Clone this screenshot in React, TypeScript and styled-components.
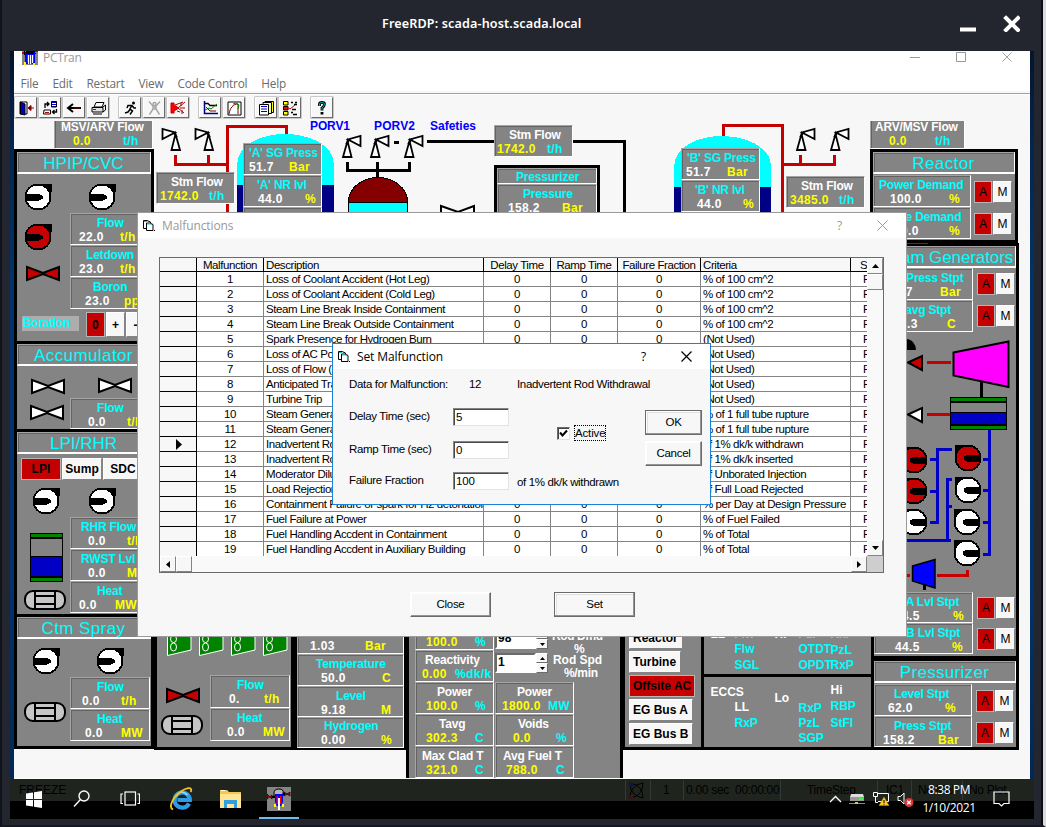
import React from "react";
import styled, { createGlobalStyle, css } from "styled-components";

const GlobalStyle = createGlobalStyle`
  * { box-sizing: border-box; }
  body { margin: 0; overflow: hidden; }
`;

const SYS = `"Liberation Sans", Arial, sans-serif`;
const SEGOE = `"Open Sans", "Noto Sans", sans-serif`;
const C = {
  gray: "#848484",
  face: "#f7f7f7",
  cyan: "#00ffff",
  yellow: "#ffff00",
  white: "#ffffff",
  red: "#c60000",
  blue: "#0000c6",
  green: "#008400",
  navy: "#000084",
  maroon: "#840000",
};

/* ---------- remote desktop frame ---------- */

const Frame = styled.div`
  width: 1046px;
  height: 827px;
  padding: 0 9px 6px 8px;
  background: #23262f;
  border-left: 2px solid #10131b;
  border-right: 3px solid #dcdcde;
  border-bottom: 2px solid #151820;
  box-shadow: inset -2px 0 0 #0d0e12;
  display: flex;
  flex-direction: column;
  overflow: hidden;
`;

const FrameBar = styled.header`
  height: 51px;
  flex: none;
  display: flex;
  align-items: center;
  padding: 0 14px 4px 372px;
  color: #fff;
  font: 600 12.6px/20px "Noto Sans", sans-serif;
  letter-spacing: 0.13px;
  span { white-space: nowrap; flex: 1; }
  svg { display: block; }
`;

const Desktop = styled.main`
  position: relative;
  width: 1024px;
  height: 768px;
  flex: none;
  padding: 0 4px;
  background: linear-gradient(#04152d, #04254f 12%, #003468 30%, #00336a 70%, #04254f);
  overflow: hidden;
`;

const AppWindow = styled.section`
  width: 1016px;
  height: 768px;
  background: ${C.face};
  display: flex;
  flex-direction: column;
`;

const TitleBar = styled.div`
  height: 20px;
  background: #fff;
  padding-left: 8px;
  display: flex;
  color: #999;
  font: 12px/14px ${SEGOE};
  overflow: hidden;
  span { flex: 1; padding-left: 5px; letter-spacing: -0.3px; }
`;

const MenuBar = styled.nav`
  height: 20px;
  background: #fff;
  padding: 3px 6.5px 0;
  display: flex;
  gap: 14px;
  color: #6b6b6b;
  font: 11.8px/18px ${SEGOE};
  letter-spacing: -0.2px;
`;

const ToolBar = styled.div`
  height: 30px;
  padding: 6px 0 0 1px;
  display: flex;
  gap: 2px;
  background: linear-gradient(${C.face} 0 2px, #a0a0a0 2px 3px, #fff 3px 4px, ${C.face} 4px);
`;

const ToolButton = styled.button<{ $gap?: boolean }>`
  width: 22px;
  height: 21px;
  padding: 0;
  margin-left: ${(p) => (p.$gap ? 8 : 0)}px;
  border: 1px solid;
  border-color: #fff #6b6b6b #6b6b6b #fff;
  box-shadow: 0 0 0 0.5px #9a9a9a;
  background: ${C.face};
  display: grid;
  place-items: center;
`;

/* ---------- plant mimic ---------- */

const Mimic = styled.div`
  position: relative;
  width: 1016px;
  height: 657px;
  overflow: hidden;
  background: ${C.face};
  font: bold 12px/14px ${SYS};
`;

const Drawing = styled.svg`
  position: absolute;
  inset: 0;
  display: block;
  text { font: bold 12px ${SYS}; }
`;

/* A piece of plant equipment pinned on the mimic at plant coordinates. */
const Pinned = styled.div<{ $x: number; $y: number; $w?: number; $h?: number }>`
  position: absolute;
  left: ${(p) => p.$x - 14}px;
  top: ${(p) => p.$y - 121}px;
  width: ${(p) => (p.$w ? p.$w + "px" : "auto")};
  height: ${(p) => (p.$h ? p.$h + "px" : "auto")};
`;

const Column = styled(Pinned)`
  background: #000;
  display: flex;
  flex-direction: column;
  overflow: hidden;
`;

const Panel = styled.section<{ $h: number; $gap?: number }>`
  height: ${(p) => p.$h}px;
  flex: none;
  margin-bottom: ${(p) => p.$gap ?? 3}px;
  background: ${C.gray};
  display: flex;
  flex-direction: column;
`;

const bevelIn = css`
  border: 1px solid;
  border-color: #a5a5a5 #fff #fff #a5a5a5;
  box-shadow: inset 1px 1px 0 #636363;
`;

const PanelTitle = styled.h2<{ $ls?: number }>`
  ${bevelIn}
  height: 22px;
  flex: none;
  margin: 0;
  border-bottom-width: 2px;
  color: ${C.cyan};
  font: 17px/20px ${SYS};
  letter-spacing: ${(p) => p.$ls ?? 0.4}px;
  text-align: center;
  padding: 1px 1px 0 0;
  white-space: nowrap;
`;

const Stack = styled.div<{ $top?: number; $left?: number; $right?: number }>`
  padding: ${(p) => p.$top ?? 0}px ${(p) => p.$right ?? 1}px 0 ${(p) => p.$left ?? 0}px;
  display: flex;
  flex-direction: column;
`;

const ReadoutBox = styled.div<{ $h: number; $w?: number; $lift?: number }>`
  ${bevelIn}
  border-bottom-width: 1px;
  height: ${(p) => p.$h}px;
  width: ${(p) => (p.$w ? p.$w + "px" : "auto")};
  flex: none;
  padding-top: ${(p) => 2 - (p.$lift ?? 0)}px;
  background: ${C.gray};
  overflow: hidden;
  white-space: nowrap;
`;

const ReadoutLabel = styled.div<{ $x: number; $c: string }>`
  height: 14px;
  padding-left: ${(p) => p.$x - 1}px;
  color: ${(p) => p.$c};
  letter-spacing: -0.2px;
`;

const ReadoutRow = styled.div<{ $v: number; $u: number; $uc: string; $vc: string }>`
  display: grid;
  height: 14px;
  grid-template-columns: ${(p) => p.$u - p.$v}px auto;
  padding-left: ${(p) => p.$v - 1}px;
  color: ${(p) => p.$vc};
  letter-spacing: 0.35px;
  span + span { color: ${(p) => p.$uc}; }
`;

type ReadoutProps = {
  l: string; lx: number; v: string; vx: number; u: string; ux: number;
  h?: number; w?: number; steam?: boolean; lift?: number;
};

function Readout({ l, lx, v, vx, u, ux, h = 32, w, steam, lift }: ReadoutProps) {
  return (
    <ReadoutBox $h={h} $w={w} $lift={lift}>
      <ReadoutLabel $x={lx} $c={steam ? C.white : C.cyan}>{l}</ReadoutLabel>
      <ReadoutRow $v={vx} $u={ux} $vc={steam ? C.yellow : C.white} $uc={steam ? C.cyan : C.yellow}>
        <span>{v}</span>
        <span>{u}</span>
      </ReadoutRow>
    </ReadoutBox>
  );
}

const KeyRow = styled.div<{ $top: number; $left: number; $gap?: number }>`
  display: flex;
  gap: ${(p) => p.$gap ?? 1}px;
  margin: ${(p) => p.$top}px 0 0 ${(p) => p.$left}px;
`;

const Key = styled.button<{ $w: number; $h?: number; $on?: boolean; $light?: boolean }>`
  flex: none;
  width: ${(p) => p.$w}px;
  height: ${(p) => p.$h ?? 22}px;
  padding: 0;
  border: 1px solid;
  border-color: #fff #848484 #848484 #fff;
  outline: ${(p) => (p.$on ? "1px solid #b5b5b5" : "none")};
  outline-offset: -1px;
  background: ${(p) => (p.$on ? C.red : C.face)};
  color: #000;
  font: ${(p) => (p.$light ? "normal 12px" : "bold 12px")}/14px ${SYS};
  letter-spacing: ${(p) => (p.$light ? 0 : 0.1)}px;
  white-space: nowrap;
  overflow: hidden;
`;

const Boration = styled.span`
  width: 57px;
  height: 15px;
  margin: 4px 6px 0 0;
  padding-left: 1px;
  background: #adadad;
  color: ${C.cyan};
  letter-spacing: -0.3px;
`;

const SetpointRow = styled.div`
  display: flex;
`;

function Setpoint({ w, kt, kl = 4, ...r }: ReadoutProps & { kt: number; kl?: number }) {
  return (
    <SetpointRow>
      <Readout w={w} {...r} />
      <KeyRow $top={kt} $left={kl}>
        <Key $w={18} $on $light>A</Key>
        <Key $w={19} $light>M</Key>
      </KeyRow>
    </SetpointRow>
  );
}

const Grid2 = styled.div`
  display: grid;
  grid-template-columns: 79px 79px;
  column-gap: 1px;
  padding-left: 6px;
`;

const SpinBox = styled.div<{ $h: number }>`
  display: flex;
  width: 53px;
  height: ${(p) => p.$h}px;
  input {
    width: 41px;
    border: 2px solid;
    border-color: #6b6b6b #fff #fff #6b6b6b;
    padding: 0 0 2px 1px;
    font: bold 12px ${SYS};
    background: #fff;
    color: #000;
  }
  div { display: flex; flex-direction: column; }
`;

const Spin = styled.button`
  width: 12px;
  flex: 1;
  min-height: 0;
  padding: 0;
  border: 1px solid;
  border-color: #fff #6b6b6b #6b6b6b #fff;
  background: ${C.face};
  display: grid;
  place-items: center;
  svg { display: block; }
`;

function Spinner({ value, h }: { value: string; h: number }) {
  return (
    <SpinBox $h={h}>
      <input defaultValue={value} />
      <div>
        <Spin><svg width="5" height="3"><path d="M2.5 0 5 3H0z" /></svg></Spin>
        <Spin><svg width="5" height="3"><path d="M2.5 3 5 0H0z" /></svg></Spin>
      </div>
    </SpinBox>
  );
}

/* ---------- plant symbols ---------- */

function Pump({ x, y, on, left }: { x: number; y: number; on?: boolean; left?: boolean }) {
  return (
    <g transform={`translate(${x} ${y})${left ? " scale(-1 1)" : ""}`} shapeRendering="crispEdges">
      <rect x="2" y="-13.5" width="11.5" height="8" />
      <circle r="12.5" fill={on ? C.red : "#fff"} stroke="#000" strokeWidth="2" />
      <path d="M-13 -3.5H1L4.5 -1V1.5L1 3.5H-13z" />
    </g>
  );
}

function BowTie({ x, y, fill = "#fff", w = 34 }: { x: number; y: number; fill?: string; w?: number }) {
  return (
    <path
      d={`M${x + 1} ${y + 1}V${y + 14}L${x + w / 2} ${y + 8}L${x + w - 1} ${y + 14}V${y + 1}L${x + w / 2} ${y + 7}z`}
      fill={fill} stroke="#000" strokeWidth="2"
    />
  );
}

function Exchanger({ x, y }: { x: number; y: number }) {
  return (
    <g stroke="#000" strokeWidth="2" fill="#c6c6c6">
      <rect x={x + 1} y={y + 1} width="40" height="18" rx="8" />
      <path d={`M${x + 11} ${y + 1}V${y + 19}M${x + 31} ${y + 1}V${y + 19}M${x + 11} ${y + 6}H${x + 31}M${x + 11} ${y + 14}H${x + 31}`} />
    </g>
  );
}

function Relief({ x, y, flip }: { x: number; y: number; flip?: boolean }) {
  return (
    <g transform={`translate(${x} ${y})${flip ? " translate(20 0) scale(-1 1)" : ""}`} fill="#fff" stroke="#000" strokeWidth="1.8">
      <path d="M1.500 1V11L14 4.500z" />
      <path d="M14.500 6L10.500 22H19z" />
      <path d="M12 4L16 9" />
    </g>
  );
}

function Fan({ x }: { x: number }) {
  return (
    <g>
      <path d={`M${x} 628L${x + 23.5} 637V650L${x} 655.500z`} fill={C.green} stroke="#fff" />
      <g fill="none" stroke="#fff">
        <ellipse cx={x + 6} cy="639" rx="3" ry="3.500" />
        <ellipse cx={x + 6} cy="647" rx="3" ry="4" />
      </g>
    </g>
  );
}

function Tank({ x, y, w, h, level }: { x: number; y: number; w: number; h: number; level: number }) {
  return (
    <g shapeRendering="crispEdges">
      <rect x={x} y={y} width={w} height={h} />
      <rect x={x + 1} y={y + 1} width={w - 2} height="3" fill={C.green} />
      <rect x={x + 1} y={y + 6} width={w - 2} height={level - 7} fill={C.gray} />
      <rect x={x + 1} y={y + level} width={w - 2} height={h - level - 6} fill={C.blue} />
      <rect x={x + 1} y={y + h - 4} width={w - 2} height="3" fill={C.green} />
    </g>
  );
}

function Steam({ x, y }: { x: number; y: number }) {
  return (
    <g shapeRendering="crispEdges">
      <path d={`M${x} ${y + 51}V${y + 31}C${x} ${y + 10} ${x + 25} ${y} ${x + 48} ${y}S${x + 97} ${y + 10} ${x + 97} ${y + 31}V${y + 51}z`} fill={C.cyan} />
      <rect x={x} y={y + 51} width="97" height="40" fill={C.navy} />
    </g>
  );
}

const LAMPS: [string, number, number, boolean?][] = [
  ["LL", 711, 638, true], ["Flw", 735, 638], ["Hi", 775, 638, true], ["PzP", 799, 638], ["RxP", 831, 638],
  ["Flw", 735, 653], ["SGL", 735, 669], ["OTDT", 799, 653], ["PzL", 831, 654],
  ["OPDT", 799, 669], ["RxP", 831, 669], ["ECCS", 711, 696, true], ["Hi", 831, 694, true],
  ["Lo", 775, 702, true], ["LL", 735, 711, true], ["RxP", 799, 712], ["RBP", 831, 710],
  ["RxP", 735, 727], ["PzL", 799, 727], ["StFl", 831, 727], ["SGP", 799, 742],
];

function Piping() {
  return (
    <Drawing width="1016" height="657" viewBox="14 121 1016 657">
      <Steam x={237} y={134} />
      <Steam x={674} y={136} />
      <g fill="none" stroke={C.red} strokeWidth="3" shapeRendering="crispEdges">
        <path d="M227.500 214V126.500H286.500V134M175.500 155V164.500H227M208.500 155V164" />
        <path d="M782.500 214V125.500H723.500V136M783 164.500H834.500V155M800.500 155V164" />
      </g>
      <Relief x={161} y={128} />
      <Relief x={194} y={128} />
      <Relief x={796} y={128} flip />
      <Relief x={830} y={128} flip />
      <g fill="none" stroke="#000" strokeWidth="3" shapeRendering="crispEdges">
        <path d="M347.500 162V170.500H409.500V162M377.500 162V178M394 142H399M427 141.500H624.500V214" />
      </g>
      <Relief x={342} y={135} flip />
      <Relief x={370} y={135} flip />
      <Relief x={404} y={135} flip />
      <g shapeRendering="crispEdges">
        <path d="M348.500 214V202C348.500 188 362 177.500 378 177.500S407.500 188 407.500 202V214z" fill={C.maroon} stroke="#000" />
        <rect x="349" y="203" width="58" height="12" fill={C.cyan} />
        <path d="M348 202.500H408" stroke="#000" />
      </g>
      <path d="M441 214V206L458 212L474 206V214" fill="#fff" stroke="#000" strokeWidth="2" />
      <g fill="#0000ff">
        <text x="310" y="130" textLength="40">PORV1</text>
        <text x="374" y="130" textLength="41">PORV2</text>
        <text x="430" y="130" textLength="46">Safeties</text>
      </g>
    </Drawing>
  );
}

function Equipment() {
  return (
    <Drawing width="1016" height="657" viewBox="14 121 1016 657">
      <Pump x={38} y={197} />
      <Pump x={102} y={197} />
      <Pump x={38} y={237} on />
      <BowTie x={26} y={266} fill={C.red} />
      <BowTie x={31} y={379} />
      <BowTie x={98} y={378} />
      <BowTie x={30} y={405} />
      <Pump x={46} y={501} />
      <Pump x={102} y={501} />
      <Tank x={30} y={533} w={33} h={49} level={24} />
      <Exchanger x={24} y={590} />
      <Pump x={46} y={661} />
      <Pump x={110} y={661} />
      <Exchanger x={24} y={702} />

      <Fan x={167.5} /><Fan x={199.5} /><Fan x={231.5} /><Fan x={263.5} />
      <BowTie x={166} y={688} fill={C.red} />
      <Exchanger x={161} y={715} />

      <g fill="#fff">
        <text x="552" y="640" textLength="51">Rod Dmd</text>
        <text x="574" y="653">%</text>
        <text x="553" y="664" textLength="49">Rod Spd</text>
        <text x="564" y="677" textLength="34">%/min</text>
      </g>
      <rect x="704" y="674" width="167" height="3" />
      {LAMPS.map(([t, x, y, w], i) => (
        <text key={i} x={x - 0.5} y={y} fill={w ? "#fff" : C.cyan}>{t}</text>
      ))}

      <path d="M906 339A10 11 0 0 1 916 350H906z" />
      <path d="M906 243.500H928" stroke={C.red} />
      <g fill="none" stroke={C.red} strokeWidth="3" shapeRendering="crispEdges">
        <path d="M927 362.500H951M927 414.500H951M905 575.500H910M937 575.500H967.500V570" />
      </g>
      <g stroke="#000" strokeWidth="2">
        <path d="M908 362.500L922 356V370z" fill={C.red} />
        <path d="M908 414.500L922 408V422z" fill="#fff" />
        <path d="M953.500 352.500L1008.500 341.500V387L953.500 375.500z" fill="#ff00ff" />
        <path d="M912.500 566L935 559.500V588L912.500 581z" fill="#0000ff" strokeWidth="1.500" />
      </g>
      <path d="M981.500 381V397M924.500 585V590" stroke="#000" strokeWidth="3" />
      <Tank x={950} y={397} w={57} h={33} level={16} />
      <g fill="none" stroke={C.blue} strokeWidth="3" shapeRendering="crispEdges">
        <path d="M989.500 430V554.500H983M983 459.500H989M983 490.500H989M983 522.500H989" />
        <path d="M952 449.500H937.500V522.500H930M930 459.500H937M930 491.500H937" />
        <path d="M952 479.500H947.500V540M947 506.500H952M905 540.500H951" />
      </g>
      <Pump x={914} y={460} on left />
      <Pump x={914} y={491} on left />
      <Pump x={914} y={522} left />
      <Pump x={968} y={458} on left />
      <Pump x={968} y={490} left />
      <Pump x={967} y={522} left />
      <Pump x={967} y={553} left />
    </Drawing>
  );
}

const BusKeys = styled.div`
  display: flex;
  flex-direction: column;
  gap: 2px;
  padding: 0 0 0 4px;
  button { text-align: left; padding-left: 3px; letter-spacing: 0; }
`;

function Plant() {
  return (
    <Mimic>
      <Piping />
      <Pinned $x={54} $y={117}><Readout l="MSV/ARV Flow" lx={7} v="0.0" vx={19} u="t/h" ux={69} w={99} steam /></Pinned>
      <Pinned $x={870} $y={117}><Readout l="ARV/MSV Flow" lx={5} v="0.0" vx={19} u="t/h" ux={65} w={95} steam /></Pinned>
      <Pinned $x={156} $y={172}><Readout l="Stm Flow" lx={15} v="1742.0" vx={4} u="t/h" ux={53} w={79} steam /></Pinned>
      <Pinned $x={494} $y={125}><Readout l="Stm Flow" lx={15} v="1742.0" vx={3} u="t/h" ux={53} w={79} steam /></Pinned>
      <Pinned $x={786} $y={176}><Readout l="Stm Flow" lx={15} v="3485.0" vx={4} u="t/h" ux={53} w={79} steam /></Pinned>
      <Pinned $x={243} $y={143}>
        <Readout l="'A' SG Press" lx={6} v="51.7" vx={6} u="Bar" ux={46} w={79} />
        <Readout l="'A' NR lvl" lx={14} v="44.0" vx={15} u="%" ux={62} w={79} />
        <Readout l="'A' WR lvl" lx={12} v="60.0" vx={15} u="%" ux={62} w={79} />
      </Pinned>
      <Pinned $x={681} $y={148}>
        <Readout l="'B' SG Press" lx={6} v="51.7" vx={5} u="Bar" ux={46} w={79} />
        <Readout l="'B' NR lvl" lx={14} v="44.0" vx={16} u="%" ux={62} w={79} />
      </Pinned>
      <Column $x={494} $y={165} $w={106} $h={60}>
        <Stack $top={3} $left={3} $right={3}>
          <ReadoutBox $h={16} $lift={1}><ReadoutLabel $x={19} $c={C.cyan}>Pressurizer</ReadoutLabel></ReadoutBox>
          <Readout l="Pressure" lx={26} v="158.2" vx={11} u="Bar" ux={65} />
        </Stack>
      </Column>

      <Column $x={14} $y={149} $w={140} $h={600}>
        <Stack $top={3} $left={3} $right={3}>
          <Panel $h={189}>
            <PanelTitle $ls={0}>HPIP/CVC</PanelTitle>
            <Stack $top={39} $left={53}>
              <Readout l="Flow" lx={27} v="22.0" vx={9} u="t/h" ux={50} />
              <Readout l="Letdown" lx={16} v="23.0" vx={9} u="t/h" ux={50} />
              <Readout l="Boron" lx={23} v="23.0" vx={15} u="ppm" ux={54} />
            </Stack>
            <KeyRow $top={3} $left={5} $gap={1}>
              <Boration>Boration</Boration>
              <Key $w={19} $h={25} $on>0</Key>
              <Key $w={19} $h={25}>+</Key>
              <Key $w={19} $h={25}>-</Key>
            </KeyRow>
          </Panel>
          <Panel $h={85}>
            <PanelTitle>Accumulator</PanelTitle>
            <Stack $top={32} $left={53}>
              <Readout l="Flow" lx={27} v="0.0" vx={18} u="t/h" ux={57} h={31} />
            </Stack>
          </Panel>
          <Panel $h={182}>
            <PanelTitle $ls={0}>LPI/RHR</PanelTitle>
            <KeyRow $top={4} $left={4}>
              <Key $w={40} $on>LPI</Key>
              <Key $w={40}>Sump</Key>
              <Key $w={40}>SDC</Key>
            </KeyRow>
            <Stack $top={37} $left={53}>
              <Readout l="RHR Flow" lx={11} v="0.0" vx={18} u="t/h" ux={57} />
              <Readout l="RWST Lvl" lx={11} v="0.0" vx={18} u="M" ux={57} />
              <Readout l="Heat" lx={27} v="0.0" vx={9} u="MW" ux={45} />
            </Stack>
          </Panel>
          <Panel $h={129}>
            <PanelTitle>Ctm Spray</PanelTitle>
            <Stack $top={38} $left={53}>
              <Readout l="Flow" lx={27} v="0.0" vx={12} u="t/h" ux={51} />
              <Readout l="Heat" lx={27} v="0.0" vx={15} u="MW" ux={51} />
            </Stack>
          </Panel>
        </Stack>
      </Column>

      <Column $x={154} $y={620} $w={143} $h={130}>
        <Stack $left={3} $right={6}>
          <Panel $h={127}>
            <Stack $top={55} $left={53}>
              <Readout l="Flow" lx={27} v="0." vx={19} u="t/h" ux={54} h={33} />
              <Readout l="Heat" lx={27} v="0.0" vx={17} u="MW" ux={53} h={33} />
            </Stack>
          </Panel>
        </Stack>
      </Column>

      <Column $x={297} $y={623} $w={112} $h={127}>
        <Stack $right={5}>
          <Readout l="Pressure" lx={26} v="1.03" vx={13} u="Bar" ux={68} h={31} lift={1} />
          <Readout l="Temperature" lx={19} v="50.0" vx={24} u="C" ux={85} h={32} />
          <Readout l="Level" lx={39} v="9.18" vx={24} u="M" ux={84} h={31} />
          <Readout l="Hydrogen" lx={27} v="0.00" vx={24} u="%" ux={84} h={31} lift={1} />
        </Stack>
      </Column>

      <Column $x={406} $y={618} $w={217} $h={160}>
        <Stack $left={3} $right={3}>
          <Panel $h={160}>
            <Grid2>
              <Readout l="Flow" lx={26} v="100.0" vx={11} u="%" ux={60} steam />
              <span />
              <Readout l="Reactivity" lx={10} v="0.00" vx={7} u="%dk/k" ux={40} steam />
              <span />
              <Readout l="Power" lx={22} v="100.0" vx={11} u="%" ux={60} steam />
              <Readout l="Power" lx={22} v="1800.0" vx={7} u="MW" ux={53} steam />
              <Readout l="Tavg" lx={24} v="302.3" vx={11} u="C" ux={60} steam />
              <Readout l="Voids" lx={23} v="0.0" vx={18} u="%" ux={61} steam />
              <Readout l="Max Clad T" lx={7} v="321.0" vx={11} u="C" ux={60} steam />
              <Readout l="Avg Fuel T" lx={8} v="788.0" vx={11} u="C" ux={61} steam />
            </Grid2>
          </Panel>
        </Stack>
      </Column>
      <Pinned $x={495} $y={629}><Spinner value="98" h={20} /></Pinned>
      <Pinned $x={495} $y={653}><Spinner value="1" h={20} /></Pinned>

      <Column $x={623} $y={600} $w={81} $h={150}>
        <Stack $left={2} $right={3}>
          <Panel $h={147}>
            <Stack $top={27} $right={0}>
              <BusKeys>
                <Key $w={54}>Reactor</Key>
                <Key $w={52}>Turbine</Key>
                <Key $w={66} $on>Offsite AC</Key>
                <Key $w={64}>EG Bus A</Key>
                <Key $w={64}>EG Bus B</Key>
              </BusKeys>
            </Stack>
          </Panel>
        </Stack>
      </Column>
      <Column $x={704} $y={600} $w={170} $h={150}>
        <Stack $right={3}><Panel $h={147} /></Stack>
      </Column>

      <Column $x={870} $y={149} $w={148} $h={100}>
        <Stack $top={3} $left={3} $right={3}>
          <Panel $h={88}>
            <PanelTitle>Reactor</PanelTitle>
            <Stack $top={1} $right={0}>
              <Setpoint l="Power Demand" lx={6} v="100.0" vx={17} u="%" ux={76} w={98} kt={6} kl={3} />
              <Setpoint l="Time Demand" lx={12} v="100.0" vx={14} u="%" ux={76} w={98} kt={6} kl={3} />
            </Stack>
          </Panel>
        </Stack>
      </Column>
      <Column $x={871} $y={243} $w={148} $h={507}>
        <Stack $top={3} $left={3} $right={3}>
          <Panel $h={410} $gap={5}>
            <PanelTitle $ls={-0.1}>Steam Generators</PanelTitle>
            <Stack $right={0}>
              <Setpoint l="SG Press Stpt" lx={12} v="51.7" vx={14} u="Bar" ux={66} w={99} kt={5} />
              <Setpoint l="Tavg Stpt" lx={25} v="302.3" vx={12} u="C" ux={73} w={99} kt={5} />
            </Stack>
            <Stack $top={260} $right={0}>
              <Setpoint l="SG A Lvl Stpt" lx={12} v="44.5" vx={21} u="%" ux={79} w={99} kt={5} h={31} />
              <Setpoint l="SG B Lvl Stpt" lx={12} v="44.5" vx={21} u="%" ux={78} w={99} kt={5} h={31} />
            </Stack>
          </Panel>
          <Panel $h={86}>
            <PanelTitle $ls={0.3}>Pressurizer</PanelTitle>
            <Stack $top={1} $right={0}>
              <Setpoint l="Level Stpt" lx={20} v="62.0" vx={14} u="%" ux={71} w={98} kt={6} h={32} />
              <Setpoint l="Press Stpt" lx={20} v="158.2" vx={9} u="Bar" ux={64} w={98} kt={6} h={31} />
            </Stack>
          </Panel>
        </Stack>
      </Column>
      <Equipment />
    </Mimic>
  );
}

/* ---------- status bar and task bar ---------- */

const StatusBar = styled.div`
  height: 41px;
  border-top: 1px solid #fff;
  background: ${C.face};
`;

const TaskBar = styled.footer`
  position: absolute;
  left: 0;
  bottom: 0;
  width: 1024px;
  height: 40px;
  background: linear-gradient(#20241f 0 22px, #000 22px);
  display: flex;
  color: #fff;
  font: 12px/18px ${SEGOE};
`;

const DimStatus = styled.div`
  position: absolute;
  inset: 0 0 auto 0;
  height: 22px;
  padding: 0 4px 0 9px;
  display: grid;
  grid-template-columns: 606px 25px 33px 97px 97px 34px 51px 1fr;
  align-items: center;
  color: #000;
  font: 12px/20px ${SYS};
`;

const StatusCell = styled.span<{ $pl?: number }>`
  height: 20px;
  padding-left: ${(p) => p.$pl ?? 8}px;
  border-left: 1px solid #333a33;
  white-space: nowrap;
  letter-spacing: -0.3px;
  &:first-child { padding: 0; border: 0; letter-spacing: 0; }
  svg { display: block; }
`;

const TaskIcons = styled.div`
  position: relative;
  display: flex;
  flex: 1;
  svg { display: block; }
`;

const TaskItem = styled.div<{ $w: number; $active?: boolean }>`
  width: ${(p) => p.$w}px;
  display: grid;
  place-items: center;
  box-shadow: ${(p) => (p.$active ? "inset 0 -2px 0 #76b9ed" : "none")};
`;

const Tray = styled.div`
  position: relative;
  display: flex;
  align-items: center;
  gap: 7px;
  padding-right: 24px;
`;

const Clock = styled.div`
  width: 54px;
  text-align: center;
  letter-spacing: -0.4px;
  margin: -1px 10px 0 1px;
  white-space: nowrap;
`;

function ReactorIcon({ size }: { size: number }) {
  return (
    <svg width={size} height={size} viewBox="0 0 24 24">
      <rect width="24" height="24" fill="#848484" />
      <path d="M7 6Q7 2 12 2T16 6V9H7z" fill="#b5b5b5" stroke="#000" />
      <path d="M0 7L5 12V8L0 12zM17 5L23 9V5L17 9z" fill={C.red} stroke="#000" strokeWidth="0.7" />
      <path d="M5 10H8M16 7H18" stroke="#000" strokeWidth="2" />
      <path d="M8 7H16V15L14 19H10L8 15z" fill="#0000ff" />
      <rect x="9.500" y="9" width="1.500" height="8" fill="#f00" />
      <rect x="13" y="9" width="1.500" height="8" fill="#f00" />
      <rect x="11" y="11" width="2" height="12" fill="#fff" />
      <path d="M7 17H9V20H7zM15 17H17V20H15z" fill="#ff0" />
    </svg>
  );
}

/* Small vessel glyph of the application window, cut by the window's top edge. */
function VesselIcon() {
  return (
    <svg width="16" height="14" shapeRendering="crispEdges">
      <rect width="16" height="14" fill="#848484" />
      <path d="M0 2H3M13 0H16" stroke={C.red} strokeWidth="2" />
      <path d="M2 0V3H4V0M12 0V2H14" stroke="#000" fill="none" />
      <rect x="3" y="1" width="10" height="12" fill="#0000ff" />
      <rect x="4" y="0" width="8" height="3" fill="#000" />
      <path d="M5.500 4V11M7.500 4V13M9.500 4V13M11.500 4V11" stroke="#f00" />
      <path d="M6.500 4V13M8.500 4V13M10.500 4V12" stroke="#fff" />
      <path d="M2 11H4V14H2zM11 12H13V14H11z" fill="#ff0" />
    </svg>
  );
}

function TaskBarView() {
  return (
    <TaskBar>
      <DimStatus>
        <StatusCell>FREEZE</StatusCell>
        <StatusCell $pl={3}>
          <svg width="16" height="19" viewBox="0 0 16 19" fill="none">
            <path d="M1 3Q14 5 14 18Q1 16 1 3M14 3Q1 5 1 18Q14 16 14 3" stroke="#000" />
            <rect x="1" y="3" width="3" height="3" fill="#101060" /><rect x="1" y="15" width="3" height="3" fill="#600808" />
          </svg>
        </StatusCell>
        <StatusCell $pl={12}>1</StatusCell>
        <StatusCell $pl={2}>0.00 sec&nbsp; 00:00:00</StatusCell>
        <StatusCell $pl={26}>TimeStep</StatusCell>
        <StatusCell>IC1</StatusCell>
        <StatusCell $pl={6}>No Mal</StatusCell>
        <StatusCell $pl={6}>No Plot</StatusCell>
      </DimStatus>
      <TaskIcons>
        <TaskItem $w={48}>
          <svg width="17" height="17" fill="#fff"><path d="M0 2.500L7 1.500V8H0zM8 1.300L16 0V8H8zM0 9H7V15.500L0 14.500zM8 9H16V17L8 15.700z" /></svg>
        </TaskItem>
        <TaskItem $w={48}>
          <svg width="18" height="18" fill="none" stroke="#fff" strokeWidth="1.400"><circle cx="11" cy="6" r="5" /><path d="M7.500 9.500L1 16.500" /></svg>
        </TaskItem>
        <TaskItem $w={48}>
          <svg width="20" height="16" fill="none" stroke="#fff" strokeWidth="1.200"><rect x="5" y="1" width="10.500" height="13" /><path d="M3 3H1V12.500H3M17.500 3H19.500V12.500H17.500" /></svg>
        </TaskItem>
        <TaskItem $w={54}>
          <svg width="24" height="24" viewBox="0 0 24 24" fill="none">
            <path d="M20 16.500A7.600 7.600 0 1 1 20.800 13H8.500" stroke="#2e9be8" strokeWidth="4.200" />
            <path d="M18.500 8Q16 5 12.500 5.200T6.500 10" stroke="#8fdcff" strokeWidth="1.400" />
            <path d="M4 22.500C-1 20 4 10 12 4.500S24 1 21.500 5" stroke="#f6c31c" strokeWidth="1.800" />
          </svg>
        </TaskItem>
        <TaskItem $w={44}>
          <svg width="23" height="20">
            <path d="M1 1H8L10 3H22V19H1z" fill="#f5c84c" /><path d="M1 5H22V19H1z" fill="#ffe594" />
            <path d="M5 19V11H18V19H15V15H8V19z" fill="#2f9fe0" /><rect x="2" y="1" width="4" height="1" fill="#fff" />
          </svg>
        </TaskItem>
        <TaskItem $w={7} />
        <TaskItem $w={40} $active><ReactorIcon size={24} /></TaskItem>
      </TaskIcons>
      <Tray>
        <svg width="13" height="8" fill="none" stroke="#fff" strokeWidth="1.400"><path d="M1 7L6.500 1.500L12 7" /></svg>
        <svg width="16" height="12"><path d="M2 1H14L15 4H1z" fill="#ddd" /><rect x="1" y="4" width="14" height="4" fill="#9a9a9a" /><rect x="10" y="5" width="4" height="2" fill="#3f3" /><path d="M0 10.500H16" stroke="#888" /><rect x="6" y="9" width="3" height="2" fill="#dc3" /></svg>
        <svg width="18" height="16" fill="none" stroke="#fff"><path d="M5 2.500H16.500V10.500H6M8 13.500H12M1.500 1.500H5.500V5.500H1.500zM3.500 6V11.500H6" /><path d="M12 6L17 14.500H7z" fill="#fc2" stroke="#b80" strokeWidth="0.500" /><path d="M12 9V12M12 12.700V13.700" stroke="#000" /></svg>
        <svg width="17" height="17" fill="none" stroke="#fff"><path d="M1 5.500H3.500L7 2V13L3.500 9.500H1z" /><circle cx="12" cy="11.500" r="4.500" fill="#d93636" stroke="none" /><path d="M10.200 9.700L13.800 13.300M13.800 9.700L10.200 13.300" strokeWidth="1.300" /></svg>
        <Clock>8:38 PM<br />1/10/2021</Clock>
        <svg width="17" height="17" fill="none" stroke="#fff" strokeWidth="1.200"><path d="M1 1H16V12.500H11L8.500 15L6 12.500H1z" /></svg>
      </Tray>
    </TaskBar>
  );
}

/* ---------- dialogs ---------- */

const Dialog = styled.section<{ $x: number; $y: number; $w: number; $h: number; $edge: string }>`
  position: absolute;
  left: ${(p) => p.$x - 10}px;
  top: ${(p) => p.$y - 51}px;
  width: ${(p) => p.$w}px;
  height: ${(p) => p.$h}px;
  background: ${C.face};
  box-shadow: 0 0 0 1px ${(p) => p.$edge};
  font: 11.5px/14px ${SYS};
  letter-spacing: -0.42px;
  color: #000;
`;

const DialogTitle = styled.header<{ $c: string; $gap: number }>`
  height: 25px;
  padding: 0 18px 0 4px;
  background: #fff;
  color: ${(p) => p.$c};
  display: flex;
  align-items: center;
  gap: ${(p) => p.$gap}px;
  font: 12px/20px ${SEGOE};
  letter-spacing: -0.1px;
  b { flex: 1; font-weight: normal; margin-left: ${(p) => 7 - p.$gap}px; }
`;

const FormIcon = () => (
  <svg width="13" height="13" fill="#fff" stroke="#000">
    <path d="M1.500 1.500H5L8.500 3V9.500H1.500z" /><path d="M2 2.500H5" stroke="#0cc" strokeWidth="1" />
    <path d="M4.500 4H8L11 5.500V11.500H4.500z" /><path d="M5 5H8.500L10 6" stroke="#0cc" strokeWidth="1" /><path d="M12 11.500H13" />
  </svg>
);

const Cross = ({ s, w = 1 }: { s: number; w?: number }) => (
  <svg width={s} height={s} viewBox="0 0 11 11"><path d="M0.500 0.500L10.500 10.500M10.500 0.500L0.500 10.500" stroke="currentColor" strokeWidth={w} /></svg>
);

const GridView = styled.div`
  width: 725px;
  height: 316px;
  margin: 19px 0 19px 21px;
  border: 1px solid #6b6b6b;
  display: grid;
  grid-template: 298px 16px / 707px 16px;
  background: ${C.face};
`;

const Table = styled.div`
  background: #fff;
  overflow: hidden;
`;

const Row = styled.div<{ $head?: boolean }>`
  display: grid;
  grid-template-columns: 37px 67px 220px 67px 67px 83px 150px 16px;
  height: ${(p) => (p.$head ? 14 : 15)}px;
  line-height: 14px;
  background: ${(p) => (p.$head ? C.face : "#fff")};
  > span {
    border-right: 1px solid ${(p) => (p.$head ? "#000" : C.gray)};
    border-bottom: 1px solid ${(p) => (p.$head ? "#000" : C.gray)};
    white-space: nowrap;
    overflow: hidden;
    padding-left: 2px;
  }
  > span:first-child { background: ${C.face}; border-color: #000; display: grid; place-items: center; }
  > span:nth-child(2) { text-align: center; padding: 0; }
  > span:nth-child(4), > span:nth-child(5), > span:nth-child(6) { text-align: center; padding: 0; }
  > span:last-child { border-right: 0; padding-left: ${(p) => (p.$head ? 9 : 12)}px; }
`;

const track = css`
  background: #f9f9f9;
  display: flex;
`;
const VTrack = styled.div`${track} flex-direction: column;`;
const HTrack = styled.div`${track}`;
const ScrollKey = styled.span<{ $push?: boolean }>`
  width: 16px;
  height: 16px;
  border: 1px solid;
  border-color: #fff #848484 #848484 #fff;
  background: ${C.face};
  display: grid;
  place-items: center;
  margin: ${(p) => (p.$push ? "auto 0 0 auto" : "0")};
`;
const Corner = styled.div`background: #cecece;`;

const ButtonRow = styled.div`
  display: flex;
  gap: 63px;
  padding-left: 272px;
`;

const PushButton = styled.button<{ $w: number; $default?: boolean }>`
  width: ${(p) => p.$w}px;
  height: 25px;
  padding: 0 0 2px;
  border: 1px solid;
  border-color: ${(p) => (p.$default ? "#6b6b6b" : "#fff #6b6b6b #6b6b6b #fff")};
  box-shadow: inset -1px -1px 0 #949494, inset 1px 1px 0 #fff${(p) => (p.$default ? ", inset 2px 2px 0 #e0e0e0" : "")};
  background: ${C.face};
  color: #000;
  font: 11.5px/14px ${SYS};
  letter-spacing: -0.3px;
`;

const ROWS: [string, string][] = [
  ["Loss of Coolant Accident (Hot Leg)", "% of 100 cm^2"],
  ["Loss of Coolant Accident (Cold Leg)", "% of 100 cm^2"],
  ["Steam Line Break Inside Containment", "% of 100 cm^2"],
  ["Steam Line Break Outside Containment", "% of 100 cm^2"],
  ["Spark Presence for Hydrogen Burn", "(Not Used)"],
  ["Loss of AC Power", "(Not Used)"],
  ["Loss of Flow (Locked Rotor)", "(Not Used)"],
  ["Anticipated Transient Without Scram", "(Not Used)"],
  ["Turbine Trip", "(Not Used)"],
  ["Steam Generator A Tube Rupture", "% of 1 full tube rupture"],
  ["Steam Generator B Tube Rupture", "% of 1 full tube rupture"],
  ["Inadvertent Rod Withdrawal", "of 1% dk/k withdrawn"],
  ["Inadvertent Rod Insertion", "of 1% dk/k inserted"],
  ["Moderator Dilution", "of Unborated Injection"],
  ["Load Rejection", "of Full Load Rejected"],
  ["Containment Failure or spark for H2 detonation", "% per Day at Design Pressure"],
  ["Fuel Failure at Power", "% of Fuel Failed"],
  ["Fuel Handling Accdent in Containment", "% of Total"],
  ["Fuel Handling Accdent in Auxiliary Building", "% of Total"],
];

function MalfunctionsDialog() {
  return (
    <Dialog $x={138} $y={213} $w={768} $h={423} $edge="#9b9b9b">
      <DialogTitle $c="#999" $gap={35}>
        <FormIcon /><b>Malfunctions</b><span>?</span><Cross s={11} />
      </DialogTitle>
      <GridView>
        <Table>
          <Row $head>
            <span /><span>Malfunction</span><span>Description</span><span>Delay Time</span>
            <span>Ramp Time</span><span>Failure Fraction</span><span>Criteria</span><span>S</span>
          </Row>
          {ROWS.map(([d, c], i) => (
            <Row key={i}>
              <span>{i === 11 && <svg width="7" height="11"><path d="M0 0L6 5.500L0 11z" /></svg>}</span>
              <span>{i + 1}</span><span>{d}</span><span>0</span><span>0</span><span>0</span><span>{c}</span><span>F</span>
            </Row>
          ))}
        </Table>
        <VTrack>
          <ScrollKey><svg width="7" height="4"><path d="M3.500 0L7 4H0z" /></svg></ScrollKey>
          <ScrollKey />
          <ScrollKey $push><svg width="7" height="4"><path d="M3.500 4L7 0H0z" /></svg></ScrollKey>
        </VTrack>
        <HTrack>
          <ScrollKey><svg width="4" height="7"><path d="M0 3.500L4 0V7z" /></svg></ScrollKey>
          <ScrollKey />
          <ScrollKey $push><svg width="4" height="7"><path d="M4 3.500L0 0V7z" /></svg></ScrollKey>
        </HTrack>
        <Corner />
      </GridView>
      <ButtonRow>
        <PushButton $w={81}>Close</PushButton>
        <PushButton $w={81} $default>Set</PushButton>
      </ButtonRow>
    </Dialog>
  );
}

const SetBody = styled.div`
  display: grid;
  grid-template-columns: 104px 64px 118px 10px 1fr;
  padding: 8px 8px 0 16px;
  grid-template-rows: 30px 32px 31px 30px;
  white-space: nowrap;
  letter-spacing: -0.34px;
`;

const Cell = styled.div<{ $pt?: number; $pl?: number; $span?: number }>`
  padding: ${(p) => p.$pt ?? 0}px 0 0 ${(p) => p.$pl ?? 0}px;
  grid-column: span ${(p) => p.$span ?? 1};
`;

const Field = styled.input`
  display: block;
  width: 56px;
  height: 18px;
  border: 1px solid;
  border-color: #848484 #e3e3e3 #e3e3e3 #848484;
  box-shadow: inset 1px 1px 0 #4a4a4a;
  padding: 0 0 1px 2px;
  background: #fff;
  color: #000;
  font: 11.5px/14px ${SYS};
  letter-spacing: -0.2px;
`;

const CheckLine = styled.label`
  display: flex;
  align-items: center;
  gap: 4px;
  svg { border: 1px solid; border-color: #6b6b6b #e3e3e3 #e3e3e3 #6b6b6b; box-shadow: inset 1px 1px 0 #444; background: #fff; }
  span { border: 1px dotted #000; padding: 0; letter-spacing: -0.15px; }
`;

function SetMalfunctionDialog() {
  return (
    <Dialog $x={333} $y={344} $w={377} $h={160} $edge="#1883d7">
      <DialogTitle $c="#000" $gap={35}>
        <FormIcon /><b>Set Malfunction</b><span>?</span><Cross s={11} w={1.2} />
      </DialogTitle>
      <SetBody>
        <Cell>Data for Malfunction:</Cell>
        <Cell $pl={16}>12</Cell>
        <Cell $span={3}>Inadvertent Rod Withdrawal</Cell>

        <Cell $pt={2}>Delay Time (sec)</Cell>
        <Cell $pt={1}><Field defaultValue="5" /></Cell>
        <Cell $pt={18} $pl={40}>
          <CheckLine>
            <svg width="13" height="13"><path d="M2 4.500L4.500 7.500L9 2.500" fill="none" stroke="#000" strokeWidth="2" /></svg>
            <span>Active</span>
          </CheckLine>
        </Cell>
        <Cell />
        <Cell $pt={3}><PushButton $w={57} $default>OK</PushButton></Cell>

        <Cell $pt={3}>Ramp Time (sec)</Cell>
        <Cell $pt={2}><Field defaultValue="0" /></Cell>
        <Cell /><Cell />
        <Cell $pt={2}><PushButton $w={57}>Cancel</PushButton></Cell>

        <Cell $pt={3}>Failure Fraction</Cell>
        <Cell $pt={2}><Field defaultValue="100" /></Cell>
        <Cell $pt={5} $span={3}>of 1% dk/k withdrawn</Cell>
      </SetBody>
    </Dialog>
  );
}

/* ---------- tool bar glyphs ---------- */

const k = { fill: "none", stroke: "#000", strokeWidth: 1.3 };
const TOOLS: { gap?: boolean; art: React.ReactNode }[] = [
  { art: <><path d="M2 2H9V14H2z" fill="#fff" stroke="#000" /><path d="M2.500 2L7 4V15L2.500 14z" fill="#0000c6" stroke="#000" /><path d="M16 8H11M13 5.500L10 8L13 10.500z" fill="#840000" stroke="#840000" /></> },
  { art: <><path d="M9.500 1.500H14.500V7H9.500z" fill="#0000c6" stroke="#000" /><path d="M10 3.500H14M10 5.500H14" stroke="#fff" /><path d="M2 10H8.500V14H1.500z" fill="#fff" stroke="#000" /><path d="M3 12.500H7" stroke="#c60000" /><path d="M3 8V4H6.500M5 2L7 4L5 6M14.500 9V12H11M12.500 10L10.500 12L12.500 14" {...k} /></> },
  { art: <><path d="M15 8H3M7 4L2 8L7 12" {...k} strokeWidth={2} /><path d="M8 8H14" stroke="#840000" /></> },
  { art: <><path d="M6 2.500H14L12 7H4z" fill="#fff" stroke="#000" /><path d="M2 7.500H13V12H2z" fill="#e0e0e0" stroke="#000" /><path d="M13 7L15.500 5V10L13 12M3 14H12" {...k} strokeWidth={1} /><path d="M3 9.500H6" stroke="#c60000" /></> },
  { gap: true, art: <><circle cx="11.500" cy="3" r="1.500" /><path d="M10 5L8 9L10.500 11L8 14.500M8 9.500L6 12L3 13M5 8L6 5.500H10L12 8H14" {...k} strokeWidth={1.500} /></> },
  { art: <g stroke="#a5a5a5" strokeWidth="1.400" fill="none"><circle cx="8.500" cy="4" r="1.500" /><path d="M3 1.500L7 6V9L3.500 14.500M14 1.500L10 6V9L13.500 14.500M7 7H10M7 9H10" /></g> },
  { art: <><path d="M1 3H4V5L8 7.500V8.500L4 11V13H1z" fill="#f00" stroke="#c60000" /><path d="M5 5L13 2M8 8L15 2M8 8L14 13M10 8H15M11 3V6M12 10V14M7 11L10 12" stroke="#a00" fill="none" /></> },
  { gap: true, art: <><path d="M2.500 1V13.500H16" stroke="#000084" strokeWidth="1.500" fill="none" /><path d="M3 3.500H6L8 5.500H15" {...k} /><path d="M3 10L7 8L9 9L15 4" stroke="#008400" fill="none" /><path d="M4 7L8 11H14" stroke="#840000" fill="none" /></> },
  { art: <><path d="M2 2H15V15H2z" fill="#fff" stroke="#000" /><path d="M3 14C4 8 7 4 12 4V14" stroke="#840000" fill="none" /><path d="M7 4L10 3L13 5L12 9" stroke="#008400" fill="none" /></> },
  { gap: true, art: <><path d="M7 1.500H15.500V12.500H7z" fill="#ff0" stroke="#000" /><path d="M5 2.500H13.500V13.500H5z" fill="#ff9" stroke="#000" /><path d="M1.500 4.500H10.500V15H1.500z" fill="#fff" stroke="#000" /><path d="M3 6.500H9M3 9H9M3 11.500H9" stroke="#0000c6" /></> },
  { art: <><path d="M1.500 1.500H6V5H1.500zM1.500 11.500H6V15H1.500z" fill="#ff0" stroke="#000" /><path d="M1.500 6.500H6V10H1.500z" fill="#f00" stroke="#000" /><path d="M9 2.500H11M12 4.500H15M9 12.500H11M11 14.500H15M13 2.500H15M10 9.500H14" {...k} /><path d="M5 7L8 9L13 5" stroke="#c60000" fill="none" /></> },
  { gap: true, art: <><path d="M5.500 6V4Q5.500 2.500 8 2.500T10.500 4Q10.500 6 8 8V10.500M8 12V14.500" stroke="#000" strokeWidth="2.800" fill="none" /><path d="M5.500 6V4Q5.500 2.500 8 2.500T10.500 4Q10.500 6 8 8V10.500" stroke="#0aa" strokeWidth="1" fill="none" /></> },
];

const Caption = styled.div`
  display: flex;
  gap: 36px;
  align-items: flex-start;
  padding: 1px 18px 0 0;
  svg { display: block; }
`;

export default function App() {
  return (
    <>
      <GlobalStyle />
      <Frame>
        <FrameBar>
          <span>FreeRDP: scada-host.scada.local</span>
          <svg width="62" height="17">
            <path d="M2 14.500H18" stroke="#fff" strokeWidth="4" />
            <path d="M48 3L60 15M60 3L48 15" stroke="#fff" strokeWidth="4" strokeLinecap="square" />
          </svg>
        </FrameBar>
        <Desktop>
          <AppWindow>
            <TitleBar>
              <VesselIcon />
              <span>PCTran</span>
              <Caption>
                <svg width="10" height="10"><path d="M0 5.500H10" stroke="#999" /></svg>
                <svg width="10" height="10" fill="none"><path d="M0.500 0.500H9.500V9.500H0.500z" stroke="#999" /></svg>
                <Cross s={10} />
              </Caption>
            </TitleBar>
            <MenuBar>
              {["File", "Edit", "Restart", "View", "Code Control", "Help"].map((m) => <span key={m}>{m}</span>)}
            </MenuBar>
            <ToolBar>
              {TOOLS.map((t, i) => (
                <ToolButton key={i} $gap={t.gap}><svg width="17" height="16">{t.art}</svg></ToolButton>
              ))}
            </ToolBar>
            <Plant />
            <StatusBar />
          </AppWindow>
          <MalfunctionsDialog />
          <SetMalfunctionDialog />
          <TaskBarView />
        </Desktop>
      </Frame>
    </>
  );
}
